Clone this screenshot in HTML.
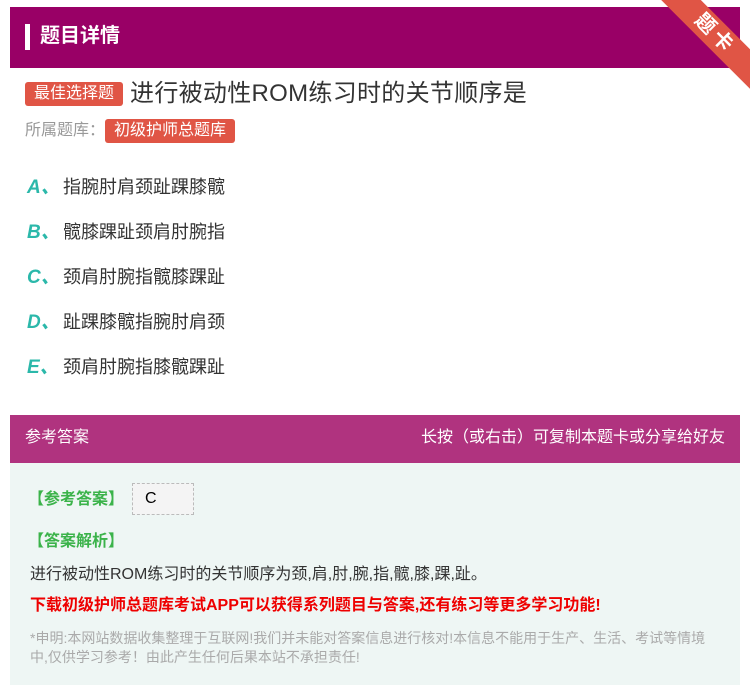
<!DOCTYPE html>
<html><head><meta charset="utf-8"><style>
*{margin:0;padding:0;box-sizing:border-box}
body{width:750px;height:685px;background:#fff;font-family:"Liberation Sans","Noto Sans CJK SC",sans-serif;position:relative;overflow:hidden}
.hd{position:absolute;left:10px;top:7px;width:730px;height:61px;background:#990066}
.hd .bar{position:absolute;left:15px;top:17px;width:5px;height:26px;background:#fff}
.hd .t{position:absolute;left:30px;top:14px;color:#fff;font-size:20px;font-weight:bold;line-height:30px}
.rib{position:absolute;right:-30px;top:20px;width:130px;height:28px;background:#e05545;transform:rotate(45deg);color:#fff;font-size:20px;font-weight:bold;text-align:center;line-height:28px;letter-spacing:4px}
.tag{display:inline-block;background:#e05545;color:#fff;border-radius:3px}
.q{position:absolute;left:25px;top:79px;font-size:24px;color:#333;line-height:30px;letter-spacing:0.3px}
.q .tag{font-size:16px;padding:0 9px;line-height:24px;vertical-align:3px;margin-right:7px;letter-spacing:0}
.lib{position:absolute;left:25px;top:119px;font-size:16px;color:#999;line-height:24px}
.lib .tag{font-size:16px;padding:0 9px;line-height:24px}
.opt{position:absolute;left:27px;font-size:18px;color:#333;line-height:24px}
.opt b{color:#2bb8aa;font-style:italic;font-size:19px;display:inline-block;width:36px}
.ah{position:absolute;left:10px;top:415px;width:730px;height:48px;background:#b0337f;color:#fff;font-size:16px;line-height:46px}
.ab{position:absolute;left:10px;top:463px;width:730px;height:222px;background:#eef6f4}
.g{color:#3bb34a;font-size:16px;font-weight:bold;position:absolute;left:18px}
</style></head><body>
<div class="hd"><div class="bar"></div><div class="t">题目详情</div></div>
<div class="rib">题卡</div>
<div class="q"><span class="tag">最佳选择题</span>进行被动性ROM练习时的关节顺序是</div>
<div class="lib">所属题库：<span class="tag">初级护师总题库</span></div>
<div class="opt" style="top:175px"><b>A、</b>指腕肘肩颈趾踝膝髋</div>
<div class="opt" style="top:220px"><b>B、</b>髋膝踝趾颈肩肘腕指</div>
<div class="opt" style="top:265px"><b>C、</b>颈肩肘腕指髋膝踝趾</div>
<div class="opt" style="top:310px"><b>D、</b>趾踝膝髋指腕肘肩颈</div>
<div class="opt" style="top:355px"><b>E、</b>颈肩肘腕指膝髋踝趾</div>
<div class="ah"><span style="position:absolute;left:15px">参考答案</span><span style="position:absolute;right:15px">长按（或右击）可复制本题卡或分享给好友</span></div>
<div class="ab">
<div class="g" style="top:22px">【参考答案】</div>
<div style="position:absolute;left:122px;top:20px;width:62px;height:32px;background:#f4f4f4;border:1px dashed #bbb;font-size:16px;padding-left:12px;line-height:30px">C</div>
<div class="g" style="top:64px">【答案解析】</div>
<div style="position:absolute;left:20px;top:97px;font-size:16px;color:#333">进行被动性ROM练习时的关节顺序为颈,肩,肘,腕,指,髋,膝,踝,趾。</div>
<div style="position:absolute;left:20px;top:128px;font-size:16px;color:#e00;font-weight:bold">下载初级护师总题库考试APP可以获得系列题目与答案,还有练习等更多学习功能!</div>
<div style="position:absolute;left:20px;top:166px;width:690px;font-size:14px;color:#aaa;line-height:19px">*申明:本网站数据收集整理于互联网!我们并未能对答案信息进行核对!本信息不能用于生产、生活、考试等情境中,仅供学习参考！由此产生任何后果本站不承担责任!</div>
</div>
</body></html>
